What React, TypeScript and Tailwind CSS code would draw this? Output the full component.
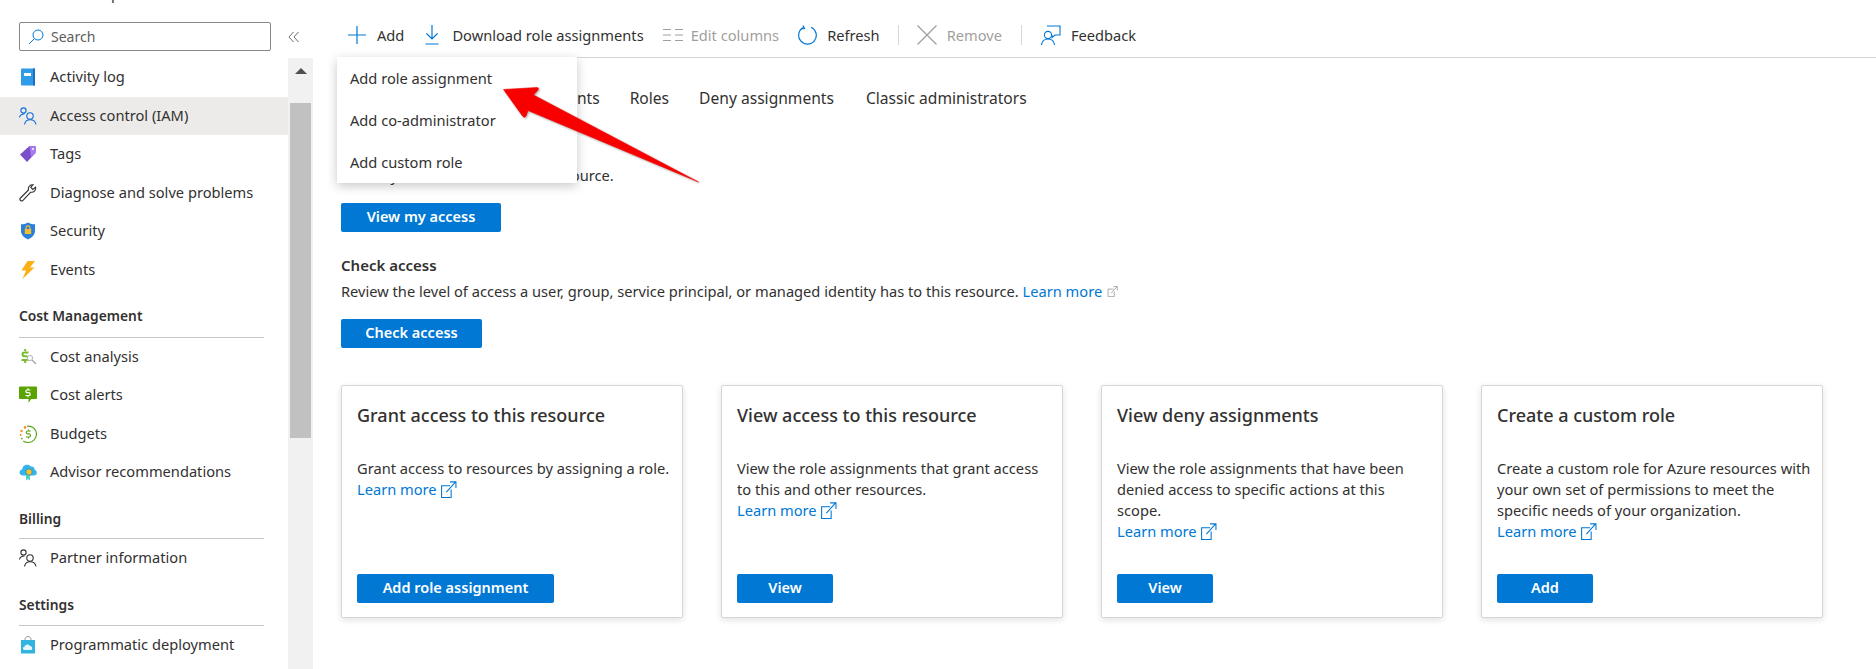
import type { ReactNode } from 'react';

const ExternalIcon = ({ className }: { className: string }) => (
  <svg viewBox="0 0 16 16" fill="none" stroke="currentColor" strokeWidth="1" className={className}>
    <path d="M9.5 4.5H1.5V15.5H10.5V8" />
    <path d="M6 10.5L14.5 1M9.5 0.8H15V6.5" />
  </svg>
);

const ActivityIcon = () => (
  <svg viewBox="0 0 18 18" className="w-[18px] h-[18px]">
    <rect x="2" y="0.5" width="14" height="17" rx="1" fill="#2f9be8" />
    <rect x="14" y="0.5" width="2" height="17" fill="#1b6fc0" />
    <rect x="5" y="5" width="7" height="3" fill="#ffffff" />
  </svg>
);

const PeopleIcon = ({ color }: { color: string }) => (
  <svg viewBox="0 0 18 18" fill="none" stroke={color} strokeWidth="1.1" className="w-[18px] h-[18px]">
    <circle cx="4.5" cy="3.5" r="2.6" />
    <path d="M0.5 10.5C1 8 2.8 7 5.5 7" />
    <circle cx="11" cy="9" r="3.2" />
    <path d="M5.5 17.5C6 14.5 8 12.8 11 12.8C14 12.8 16.5 14.5 17 17.5" />
  </svg>
);

const TagIcon = () => (
  <svg viewBox="0 0 18 18" className="w-[18px] h-[18px]">
    <path d="M1 9.5L10.5 1L17 1.5L16.5 8L8 17Z" fill="#7a4fc9" />
    <path d="M10.5 1L17 1.5L16.5 8L12 12Z" fill="#a67af0" />
    <circle cx="14" cy="4" r="1" fill="#ffffff" />
  </svg>
);

const WrenchIcon = () => (
  <svg viewBox="0 0 18 18" fill="none" stroke="#323130" strokeWidth="1.1" className="w-[18px] h-[18px]">
    <path d="M1 14.5L9.5 6C8.8 3.5 10.5 1 13 0.8L14 0.8L11.8 3.2L13.8 5.4L16.5 3.2C17.2 5.8 15 8.8 11.8 8.2L3.5 16.8C2.5 17.6 0.4 16 1 14.5Z" />
  </svg>
);

const ShieldIcon = () => (
  <svg viewBox="0 0 18 18" className="w-[18px] h-[18px]">
    <path d="M9 0.5C11 1.8 13.5 2.3 16 2.3V9C16 13 12.5 16 9 17.5C5.5 16 2 13 2 9V2.3C4.5 2.3 7 1.8 9 0.5Z" fill="#2a7fdc" />
    <rect x="5.8" y="7" width="6.4" height="5" fill="#f5bf2b" />
    <path d="M7 7V5.5C7 3.4 11 3.4 11 5.5V7" fill="none" stroke="#f5bf2b" strokeWidth="1.2" />
  </svg>
);

const BoltIcon = () => (
  <svg viewBox="0 0 18 18" className="w-[18px] h-[18px]">
    <path d="M8.5 0H16L11 6.5H15.5L3.5 18L7 9.5H2.5Z" fill="#fbb116" />
  </svg>
);

const CostAnalysisIcon = () => (
  <svg viewBox="0 0 18 18" className="w-[18px] h-[18px]">
    <path d="M9.5 4.5H5.2C3 4.5 3 8 5.2 8.2H7.5C9.6 8.5 9.6 12 7.5 12H2.5" fill="none" stroke="#76bc2d" strokeWidth="2" />
    <rect x="5.2" y="1" width="2" height="2" fill="#76bc2d" />
    <rect x="5.2" y="13" width="2" height="2" fill="#76bc2d" />
    <circle cx="11" cy="10" r="2.6" fill="#ffffff" stroke="#b5b5b5" strokeWidth="1" />
    <path d="M13 12L17 16" stroke="#a8a8a8" strokeWidth="1.4" />
  </svg>
);

const CostAlertIcon = () => (
  <svg viewBox="0 0 18 18" className="w-[18px] h-[18px]">
    <path d="M1 0.5H17C17.5 0.5 18 1 18 1.5V12C18 12.5 17.5 13 17 13H12L9.5 17V13H1C0.5 13 0 12.5 0 12V1.5C0 1 0.5 0.5 1 0.5Z" fill="#5ba300" />
    <path d="M11.5 4H8C6.5 4 6.5 6.5 8 6.7H10C11.6 7 11.6 9.5 10 9.5H6.5M9 2.2V3.4M9 10V11.2" fill="none" stroke="#ffffff" strokeWidth="1.2" />
  </svg>
);

const BudgetIcon = () => (
  <svg viewBox="0 0 18 18" className="w-[18px] h-[18px]">
    <path d="M8 1.2C13 0.5 17.5 4 17.5 9C17.5 13.8 13.5 17.5 9 17.5C7.2 17.5 5.6 17 4.2 16" fill="none" stroke="#5ea51f" strokeWidth="1.1" />
    <path d="M11.8 6H8.6C7 6 7 8.7 8.6 8.9H10.2C11.9 9.2 11.9 12 10.2 12H7M9.5 4.4V5.6M9.5 12.4V13.6" fill="none" stroke="#5ea51f" strokeWidth="1.2" />
    <circle cx="2.5" cy="6" r="1.2" fill="#f78d1e" />
    <circle cx="6" cy="2.4" r="1.3" fill="#f78d1e" />
    <circle cx="1.6" cy="10" r="1" fill="#f78d1e" />
    <circle cx="2.8" cy="13.6" r="0.9" fill="#5ea51f" />
  </svg>
);

const AdvisorIcon = () => (
  <svg viewBox="0 0 18 18" className="w-[18px] h-[18px]">
    <path d="M4 12.5C0 12.5 -0.8 7.5 3 6.6C3.5 2 9 0 12 3.6C15 3.4 16 6 15.6 6.8C18.6 7.6 18.6 12.5 15 12.5Z" fill="#32b4ec" />
    <path d="M7 12H11V17.5L9 16L7 17.5Z" fill="#4fd2c4" />
    <circle cx="10" cy="9" r="3.2" fill="#f7c325" stroke="#2a86c8" strokeWidth="0.8" />
  </svg>
);

const DeployIcon = () => (
  <svg viewBox="0 0 18 18" className="w-[18px] h-[18px]">
    <path d="M6 4.5V3C6 -0.2 12 -0.2 12 3V4.5" fill="none" stroke="#a19f9d" strokeWidth="1" />
    <path d="M2 4H16V17.5H2Z" fill="#32b4e0" />
    <path d="M5.5 14C3.5 14 3.5 11 5.5 10.8C6 8 10 7.6 11 10C13.6 9.8 14 14 11.8 14Z" fill="#e6f6fc" />
  </svg>
);

const ToolbarItem = ({
  icon,
  label,
  muted,
  gap,
}: {
  icon: ReactNode;
  label: string;
  muted?: boolean;
  gap: string;
}) => (
  <div className={`flex items-center ${gap} ${muted ? 'text-[#a19f9d]' : 'text-[#323130]'}`}>
    {icon}
    <span>{label}</span>
  </div>
);

const NavRow = ({ icon, label, active }: { icon: ReactNode; label: string; active?: boolean }) => (
  <div className={`flex items-center h-[38.5px] pl-[19px] gap-[13px] ${active ? 'bg-[#edebe9]' : ''}`}>
    <span className="flex w-[18px] h-[18px]">{icon}</span>
    <span className="pb-[2px] whitespace-nowrap">{label}</span>
  </div>
);

const NavHeading = ({ label, height }: { label: string; height: string }) => (
  <div className={`ml-[19px] mr-[24px] pt-[17px] text-[13.8px] font-semibold border-b border-[#c8c6c4] ${height}`}>{label}</div>
);

const LearnMore = () => (
  <div className="flex items-center gap-[3px] text-[#0078d4]">
    <span>Learn more</span>
    <ExternalIcon className="w-[17px] h-[17px]" />
  </div>
);

const CARDS = [
  {
    title: 'Grant access to this resource',
    text: 'Grant access to resources by assigning a role.',
    action: 'Add role assignment',
    width: 'w-[197px]',
  },
  {
    title: 'View access to this resource',
    text: 'View the role assignments that grant access to this and other resources.',
    action: 'View',
    width: 'w-[96px]',
  },
  {
    title: 'View deny assignments',
    text: 'View the role assignments that have been denied access to specific actions at this scope.',
    action: 'View',
    width: 'w-[96px]',
  },
  {
    title: 'Create a custom role',
    text: 'Create a custom role for Azure resources with your own set of permissions to meet the specific needs of your organization.',
    action: 'Add',
    width: 'w-[96px]',
  },
];

const PrimaryButton = ({ label, width }: { label: string; width: string }) => (
  <button className={`h-[29px] pb-[3px] rounded-[2px] bg-[#0078d4] text-white text-[14.5px] font-semibold ${width}`}>{label}</button>
);

export default function App() {
  return (
    <div className="relative flex h-[669px] w-[1876px] overflow-hidden bg-white font-['Noto_Sans',sans-serif] text-[14.65px] leading-[20px] text-[#323130]">
      {/* left blade menu */}
      <aside className="w-[313px] shrink-0 flex flex-col">
        <div className="h-[58px] shrink-0 overflow-hidden">
          <div className="h-[22px] overflow-hidden">
            <div className="-mt-[17px] pl-[19px] whitespace-nowrap">Azure subscription 1</div>
          </div>
          <div className="flex items-center">
            <div className="flex items-center w-[252px] h-[29px] ml-[19px] pl-[8px] gap-[7px] border border-[#8a8886] rounded-[2px] text-[14px] text-[#605e5c]">
              <svg viewBox="0 0 16 16" fill="none" stroke="#0078d4" strokeWidth="1" className="w-[16px] h-[16px]">
                <circle cx="10" cy="6" r="5" />
                <path d="M6.5 9.5L1 15" />
              </svg>
              <span>Search</span>
            </div>
            <svg viewBox="0 0 12 12" fill="none" stroke="#605e5c" strokeWidth="0.9" className="ml-[17px] w-[12px] h-[12px]">
              <path d="M5.5 1L1 6L5.5 11M10.5 1L6 6L10.5 11" />
            </svg>
          </div>
        </div>
        <div className="flex flex-1 min-h-0">
          <div className="w-[288px] shrink-0">
            <NavRow icon={<ActivityIcon />} label="Activity log" />
            <NavRow icon={<PeopleIcon color="#0f6cd8" />} label="Access control (IAM)" active />
            <NavRow icon={<TagIcon />} label="Tags" />
            <NavRow icon={<WrenchIcon />} label="Diagnose and solve problems" />
            <NavRow icon={<ShieldIcon />} label="Security" />
            <NavRow icon={<BoltIcon />} label="Events" />
            <NavHeading label="Cost Management" height="h-[48.5px]" />
            <NavRow icon={<CostAnalysisIcon />} label="Cost analysis" />
            <NavRow icon={<CostAlertIcon />} label="Cost alerts" />
            <NavRow icon={<BudgetIcon />} label="Budgets" />
            <NavRow icon={<AdvisorIcon />} label="Advisor recommendations" />
            <NavHeading label="Billing" height="h-[47.5px]" />
            <NavRow icon={<PeopleIcon color="#323130" />} label="Partner information" />
            <NavHeading label="Settings" height="h-[48.5px]" />
            <NavRow icon={<DeployIcon />} label="Programmatic deployment" />
          </div>
          {/* scrollbar */}
          <div className="w-[25px] bg-[#f1f1f1] px-[2px]">
            <div className="flex justify-center pt-[10px] h-[45px]">
              <div className="w-0 h-0 border-x-[6px] border-x-transparent border-b-[6px] border-b-[#505050]" />
            </div>
            <div className="h-[335px] bg-[#c1c1c1]" />
          </div>
        </div>
      </aside>

      <main className="relative flex-1 min-w-0">
        <div className="flex items-center h-[58px] ml-[24px] pl-[11px] pt-[13px] border-b border-[#d6d6d6] whitespace-nowrap">
          <ToolbarItem
            gap="gap-[11px]"
            label="Add"
            icon={
              <svg viewBox="0 0 18 18" fill="none" stroke="#0078d4" strokeWidth="1.2" className="w-[18px] h-[18px]">
                <path d="M9 0V18M0 9H18" />
              </svg>
            }
          />
          <div className="ml-[21px]">
            <ToolbarItem
              gap="gap-[13px]"
              label="Download role assignments"
              icon={
                <svg viewBox="0 0 14 20" fill="none" stroke="#0078d4" strokeWidth="1.2" className="w-[14px] h-[20px]">
                  <path d="M7 0V14M1.5 8.5L7 14L12.5 8.5M0.5 19H13.5" />
                </svg>
              }
            />
          </div>
          <div className="ml-[19px]">
            <ToolbarItem
              muted
              gap="gap-[8px]"
              label="Edit columns"
              icon={
                <svg viewBox="0 0 20 14" fill="none" stroke="#a19f9d" strokeWidth="1.2" className="w-[20px] h-[14px]">
                  <path d="M0 1.5H8M12 1.5H20M0 7H8M12 7H20M0 12.5H8M12 12.5H20" />
                </svg>
              }
            />
          </div>
          <div className="ml-[19px]">
            <ToolbarItem
              gap="gap-[9px]"
              label="Refresh"
              icon={
                <svg viewBox="0 0 20 20" fill="none" stroke="#0078d4" strokeWidth="1.2" className="w-[20px] h-[20px]">
                  <path d="M13 2.2A8.8 8.8 0 1 1 5.5 2.4" />
                  <path d="M5 0.5L6.5 3.5L3 4" />
                </svg>
              }
            />
          </div>
          <div className="ml-[18px] w-px h-[20px] bg-[#d6d6d6]" />
          <div className="ml-[18px]">
            <ToolbarItem
              muted
              gap="gap-[10px]"
              label="Remove"
              icon={
                <svg viewBox="0 0 20 20" fill="none" stroke="#a19f9d" strokeWidth="1.2" className="w-[20px] h-[20px]">
                  <path d="M0.5 0.5L19.5 19.5M19.5 0.5L0.5 19.5" />
                </svg>
              }
            />
          </div>
          <div className="ml-[19px] w-px h-[20px] bg-[#d6d6d6]" />
          <div className="ml-[19px]">
            <ToolbarItem
              gap="gap-[10px]"
              label="Feedback"
              icon={
                <svg viewBox="0 0 20 20" fill="none" stroke="#0078d4" strokeWidth="1.1" className="w-[20px] h-[20px]">
                  <path d="M6 1H19V10H14L11 12.5V10" />
                  <circle cx="7" cy="10" r="3.6" />
                  <path d="M0.5 20C1 16 3.5 14 7 14C10.5 14 13 16 13.5 20" />
                </svg>
              }
            />
          </div>
        </div>

        <div className="pl-[28px] pr-[53px]">
          <div className="flex mt-[30px] gap-[30px] text-[15.6px] whitespace-nowrap">
            <span className="mr-[4px]">Check access</span>
            <span>Role assignments</span>
            <span>Roles</span>
            <span>Deny assignments</span>
            <span className="ml-[2px]">Classic administrators</span>
          </div>
          <div className="mt-[25px] font-semibold">My access</div>
          <div className="mt-[12px]">View my level of access to this resource.</div>
          <div className="mt-[18px]">
            <PrimaryButton label="View my access" width="w-[160px]" />
          </div>
          <div className="mt-[23px] text-[15px] font-semibold">Check access</div>
          <div className="mt-[6px] flex items-center gap-[5px]">
            <span>
              Review the level of access a user, group, service principal, or managed identity has to this resource.{' '}
              <span className="text-[#0078d4]">Learn more</span>
            </span>
            <ExternalIcon className="w-[11px] h-[11px] text-[#8a8886]" />
          </div>
          <div className="mt-[18px]">
            <PrimaryButton label="Check access" width="w-[141px]" />
          </div>

          <div className="grid grid-cols-4 gap-[38px] mt-[37px]">
            {CARDS.map((card) => (
              <div
                key={card.title}
                className="flex flex-col h-[233px] pt-[17px] pl-[15px] pr-[11px] pb-[14px] bg-white border border-[#d6d6d6] rounded-[2px] shadow-[0_2px_6px_rgba(0,0,0,0.12)]"
              >
                <h3 className="text-[18px] leading-[24px] font-medium">{card.title}</h3>
                <div className="mt-[31px] leading-[21px]">
                  <p>{card.text}</p>
                  <LearnMore />
                </div>
                <div className="mt-auto">
                  <PrimaryButton label={card.action} width={card.width} />
                </div>
              </div>
            ))}
          </div>
        </div>

        {/* add menu */}
        <div className="absolute left-[24px] top-[57px] w-[240px] h-[126px] bg-white shadow-[0_3px_10px_rgba(0,0,0,0.22)]">
          <div className="flex items-center h-[42px] px-[13px]">Add role assignment</div>
          <div className="flex items-center h-[42px] px-[13px]">Add co-administrator</div>
          <div className="flex items-center h-[42px] px-[13px]">Add custom role</div>
        </div>
      </main>

      {/* red annotation arrow */}
      <svg viewBox="500 85 202 100" className="absolute left-[500px] top-[85px] w-[202px] h-[100px] drop-shadow-[1px_1px_1px_rgba(0,0,0,0.35)]">
        <path
          d="M503.5 89.5L537 87.5Q539.5 88 538 90L533.5 95L698.5 182L528 110.5L526 116Q524.5 118.5 522.5 116Z"
          fill="#f80000"
          stroke="#f80000"
          strokeWidth="0.6"
          strokeLinejoin="round"
        />
      </svg>
    </div>
  );
}
